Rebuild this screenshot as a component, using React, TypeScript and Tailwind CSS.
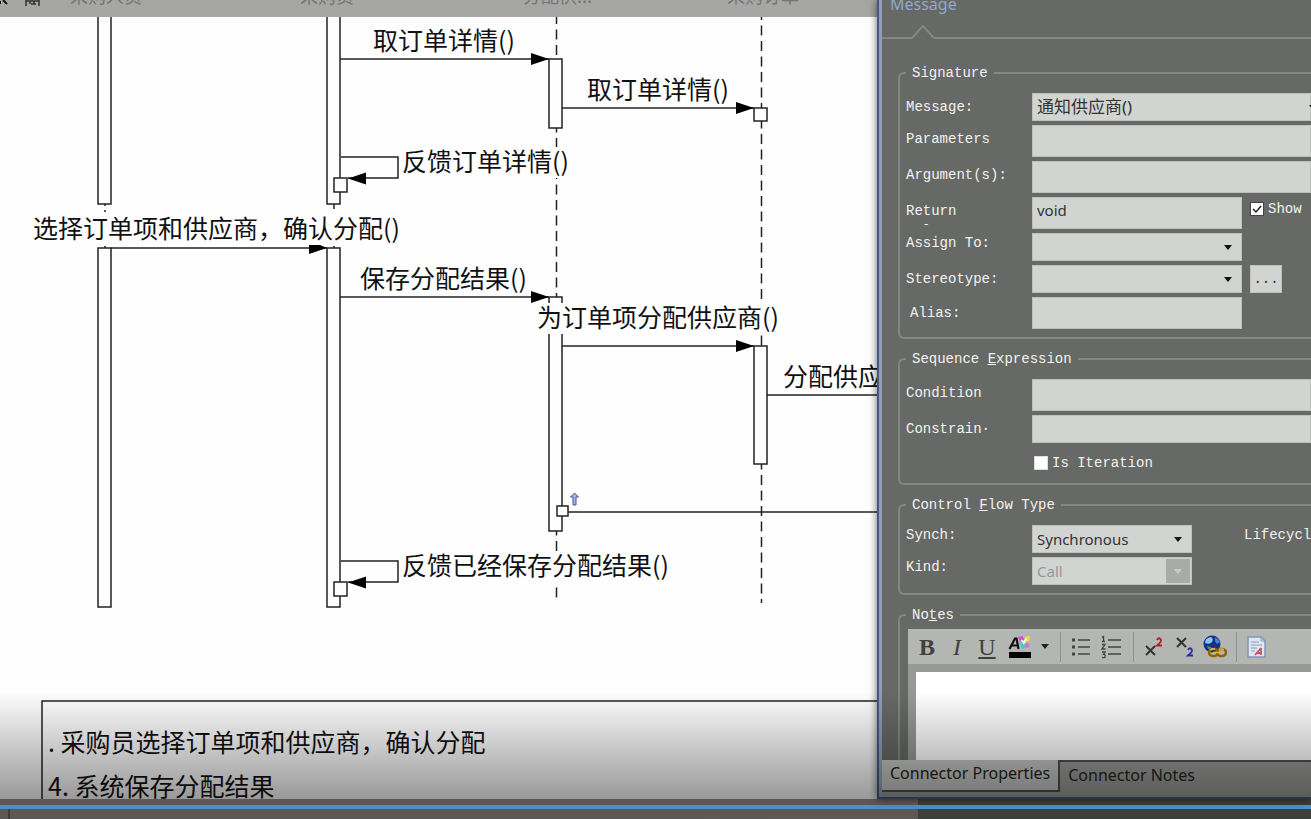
import { FC, ReactNode, useState } from "react";

interface PointProps {
    x: number
    y: number
}

interface LabelProps extends PointProps {
    width: number
    text: string
}

// message text, with a white plate that hides the lifeline behind it
const Label: FC<LabelProps> = ({ x, y, width, text }) => (
    <g>
        <rect x={x} y={y - 24} width={width} height={31} fill="#fdfefd" />
        <text x={x} y={y} fontSize={25} fill="#111">{text}</text>
    </g>
)

const Activation: FC<PointProps & { height: number, width?: number }> = ({ x, y, height, width = 13 }) => (
    <rect x={x} y={y} width={width} height={height} fill="#fdfefd" stroke="#222" strokeWidth={1.5} />
)

const Arrow: FC<{ from: number, to: number, y: number }> = ({ from, to, y }) => (
    <g>
        <path d={`M${from} ${y}H${to}`} stroke="#222" strokeWidth={1.5} />
        <path d={`M${to} ${y}l-18 -6v12z`} fill="#000" />
    </g>
)

const SelfMessage: FC<{ y: number }> = ({ y }) => (
    <g>
        <path d={`M341 ${y}H398V${y + 21}H348`} fill="none" stroke="#222" strokeWidth={1.5} />
        <path d={`M348 ${y + 21.5}l18 -6v12z`} fill="#000" />
        <Activation x={334} y={y + 21} height={14} />
    </g>
)

const participants = [
    { name: "采购人员", x: 70 },
    { name: "采购员", x: 300 },
    { name: "分配供...", x: 523 },
    { name: "采购订单", x: 727 },
]

const Diagram: FC = () => (
    <svg className="block h-full w-full bg-[#fdfefd] font-['Noto_Sans_CJK_SC',sans-serif]">
        <path d="M556.5 17V603" stroke="#222" strokeWidth={1.5} strokeDasharray="10 5.5" strokeDashoffset={3} />
        <path d="M761.5 17V603" stroke="#222" strokeWidth={1.5} strokeDasharray="10 5.5" strokeDashoffset={7} />
        <path d="M105 204v2M105 210v2M334 204v5M105 246v2M334 246v2" stroke="#222" strokeWidth={1.5} />

        <Activation x={98} y={-10} height={214} />
        <Activation x={327} y={-10} height={214} />
        <Activation x={549} y={59} height={69} />
        <Activation x={754} y={108} height={13} />
        <Activation x={98} y={248} height={359} />
        <Activation x={327} y={248} height={359} />
        <Activation x={549} y={297} height={234} />
        <Activation x={754} y={346} height={118} />

        <Arrow from={340} to={549} y={59} />
        <Arrow from={562} to={754} y={108} />
        <Arrow from={340} to={549} y={297} />
        <Arrow from={562} to={754} y={346} />
        <path d="M767 395H2000M568 512H2000" stroke="#222" strokeWidth={1.5} />
        <SelfMessage y={157} />
        <SelfMessage y={561} />
        <Activation x={557} y={506} width={11} height={10} />
        <path d="M574.500 493l4 4h-2.500v8h-3v-8h-2.500z" fill="#a9b0f0" stroke="#4c5488" strokeWidth={1} />

        <Label x={373} y={50} width={144} text="取订单详情()" />
        <Label x={587} y={99} width={144} text="取订单详情()" />
        <Label x={402} y={171} width={170} text="反馈订单详情()" />
        <Label x={33} y={238} width={371} text="选择订单项和供应商，确认分配()" />
        <Label x={360} y={288} width={170} text="保存分配结果()" />
        <Label x={537} y={327} width={246} text="为订单项分配供应商()" />
        <Label x={783} y={386} width={100} text="分配供应" />
        <Label x={402} y={575} width={271} text="反馈已经保存分配结果()" />
        <path d="M111 248H327" stroke="#222" strokeWidth={1.5} />
        <path d="M309 245h11l7 3l-18 6z" fill="#000" />

        <path d="M42 820V701H2000" fill="none" stroke="#222" strokeWidth={1.5} />
        <text x={48} y={752} fontSize={25} fill="#111">. 采购员选择订单项和供应商，确认分配</text>
        <text x={48} y={796} fontSize={25} fill="#111">4. 系统保存分配结果</text>

        {/* frozen header with participant names */}
        <rect width="100%" height={17} fill="#a6a7a5" />
        <path d="M0 1v3M3 0l4 4" stroke="#111" strokeWidth={2} />
        <path d="M26 0v6M39 0v6M26 1h13M30 1v3M34 1v3M31 4h5" fill="none" stroke="#333" strokeWidth={1.5} />
        {participants.map(p => (
            <text key={p.name} x={p.x} y={3} fontSize={18} fill="#747573">{p.name}</text>
        ))}
    </svg>
)

const Group: FC<{ title: ReactNode, className: string, children: ReactNode }> = ({ title, className, children }) => (
    <fieldset className={`min-w-0 rounded-l-md border-2 border-r-0 border-[#858784] pl-1.5 ${className}`}>
        <legend className="px-1.5 text-sm leading-5">{title}</legend>
        {children}
    </fieldset>
)

const Caret: FC<{ className?: string }> = ({ className = "right-2.5 text-[#111]" }) => (
    <svg className={`pointer-events-none absolute top-3 h-[5px] w-2 ${className}`} viewBox="0 0 8 5">
        <path d="M0 0h8L4 5z" fill="currentColor" />
    </svg>
)

interface RowProps {
    id: string
    label: string
    labelClass?: string
    children: ReactNode
}

const Row: FC<RowProps> = ({ id, label, labelClass = "mt-1", children }) => (
    <div className="flex items-start">
        <label htmlFor={id} className={`w-[126px] shrink-0 text-sm leading-5 ${labelClass}`}>{label}</label>
        {children}
    </div>
)

const field = "block border border-[#bfc1be] bg-[#d2d4d1] px-1 text-[#333] outline-none font-['Noto_Sans','Noto_Sans_CJK_SC',sans-serif]"

const ToolButton: FC<{ label: string, className: string, children: ReactNode }> = ({ label, className, children }) => (
    <button type="button" aria-label={label} className={`flex h-8 shrink-0 items-center justify-center text-[#3f403f] ${className}`}>
        {children}
    </button>
)

const Toolbar: FC = () => (
    <div className="flex h-[35px] shrink-0 items-center bg-[#b4b6b4] pl-1">
        <ToolButton label="Bold" className="w-[30px] font-['Liberation_Serif',serif] text-2xl font-bold">B</ToolButton>
        <ToolButton label="Italic" className="w-[30px] font-['Liberation_Serif',serif] text-2xl italic">I</ToolButton>
        <ToolButton label="Underline" className="w-[30px] font-['Liberation_Serif',serif] text-2xl underline">U</ToolButton>
        <ToolButton label="Font colour" className="w-9">
            <svg width="24" height="24" viewBox="0 0 24 24">
                <path d="M1.500 14L7 3.500h1.500l2 10.500M4 10.500h6" fill="none" stroke="#111" strokeWidth="2.200" />
                <path d="M10 2l5-1 1 4-4 2z" fill="#d24fd0" />
                <path d="M17 2l5-1-1 5-4 1z" fill="#f0dc50" />
                <path d="M12 8l4-1 2 5-4 2z" fill="#35cfdc" />
                <path d="M18 8l4 1-2 4-3-1z" fill="#e06cc0" />
                <path d="M13 5l4 3M18 4l-3 5" stroke="#fff" strokeWidth="1.500" />
                <rect x="1" y="17" width="22" height="6" fill="#000" />
            </svg>
        </ToolButton>
        <ToolButton label="Pick font colour" className="w-3.5">
            <svg width="8" height="5" viewBox="0 0 8 5"><path d="M0 0h8L4 5z" fill="#222" /></svg>
        </ToolButton>
        <span className="mx-2 h-[30px] w-px bg-[#8e908e]" />
        <ToolButton label="Bulleted list" className="w-6">
            <svg width="20" height="20" viewBox="0 0 20 20" stroke="#444" strokeWidth="1.500">
                <path d="M7 3h12M7 10h12M7 17h12" />
                <path d="M1 3h3M1 10h3M1 17h3" strokeWidth="3" />
            </svg>
        </ToolButton>
        <ToolButton label="Numbered list" className="w-9">
            <svg width="20" height="24" viewBox="0 0 20 24" stroke="#444" strokeWidth="1.300" fill="none">
                <path d="M7 5h13M7 12h13M7 19h13" strokeWidth="1.500" />
                <path d="M1 2.500l1.500-1v5M1 6.500h3M1 9.500h3l-3 4.500h3.500M1 17h3l-1.500 2.300q2 0 1.700 2t-3.200 1" />
            </svg>
        </ToolButton>
        <span className="mx-1 h-[30px] w-px bg-[#8e908e]" />
        <ToolButton label="Superscript" className="w-8">
            <svg width="18" height="20" viewBox="0 0 18 20" fill="none">
                <path d="M1 9l9 9M10 9l-9 9" stroke="#333" strokeWidth="2" />
                <path d="M12 3q2-3.500 4 0q.5 2-4 5.500h5" stroke="#a8232c" strokeWidth="1.800" />
            </svg>
        </ToolButton>
        <ToolButton label="Subscript" className="w-[30px]">
            <svg width="18" height="20" viewBox="0 0 18 20" fill="none">
                <path d="M1 1l9 9M10 1l-9 9" stroke="#333" strokeWidth="2" />
                <path d="M12 13q2-3.500 4 0q.5 2-4 5.500h5" stroke="#2b2fa5" strokeWidth="1.800" />
            </svg>
        </ToolButton>
        <ToolButton label="Hyperlink" className="w-[30px]">
            <svg width="24" height="24" viewBox="0 0 24 24" fill="none">
                <circle cx="9" cy="9" r="8.500" fill="#15308a" />
                <path d="M2 8q0-5 6-6q3 2 1 5t-7 1z" fill="#8cc4ea" />
                <path d="M12 2q4 2 5 5l-3 2-2-3z" fill="#4f7fc4" />
                <path d="M4 11l4 1 1 4q-4-1-5-5z" fill="#4d8f8a" />
                <rect x="6" y="14" width="9" height="7" rx="3.500" stroke="#8f6208" strokeWidth="2.500" />
                <rect x="14" y="14" width="9" height="7" rx="3.500" stroke="#8f6208" strokeWidth="2.500" />
                <path d="M10 17.500h9M7 15q2-1.500 5-1M16 14.500q3-1 5 0" stroke="#e6b93c" strokeWidth="1.500" />
            </svg>
        </ToolButton>
        <span className="mx-1.5 h-[30px] w-px bg-[#8e908e]" />
        <ToolButton label="Insert document" className="w-7">
            <svg width="20" height="24" viewBox="0 0 20 24" fill="none">
                <path d="M1 2h13l4 4v16H1z" fill="#dfe6f1" stroke="#8496bd" strokeWidth="1.500" />
                <path d="M14 2v4h4M4 7h8M4 10h11M4 13h6M4 16h4" stroke="#8a9bc0" />
                <path d="M14 13v7M14 13l-6 7M10 18h4" stroke="#c9545c" strokeWidth="1.800" />
            </svg>
        </ToolButton>
    </div>
)

const PropertiesPanel: FC = () => {
    const [message, setMessage] = useState("通知供应商()")
    const [returnValue, setReturnValue] = useState("void")
    const [show, setShow] = useState(true)
    const [iteration, setIteration] = useState(false)
    const [synch, setSynch] = useState("Synchronous")

    return (
        <aside className="relative flex w-[434px] shrink-0 flex-col overflow-hidden border-b-2 border-l-2 border-[#46587c] bg-[#676966] font-['Liberation_Mono',monospace] text-[#f2f3f1]">
            <div className="flex min-h-0 flex-1 flex-col border-l-3 border-[#909fb4]">
                <h2 className="-mt-2 h-[33px] pl-2 font-['Noto_Sans',sans-serif] text-base leading-6 text-[#93a6cc]">Message</h2>
                {/* tab underline with a notch below the active title */}
                <div className="flex h-3.5 items-end">
                    <span className="h-0.5 w-[30px] bg-[#858784]" />
                    <svg width="22" height="14" viewBox="0 0 22 14">
                        <path d="M0 13L11 1L22 13" fill="none" stroke="#858784" strokeWidth="2" />
                    </svg>
                    <span className="h-0.5 flex-1 bg-[#858784]" />
                </div>

                <form className="mt-6 flex min-h-0 flex-1 flex-col gap-2.5 pl-4">
                    <Group title="Signature" className="pt-2.5 pb-2">
                        <div className="flex flex-col gap-1">
                            <Row id="message" label="Message:">
                                <div className="relative min-w-0 flex-1">
                                    <select id="message" value={message} onChange={e => setMessage(e.target.value)}
                                        className={`${field} h-7 w-full appearance-none text-[17px]`}>
                                        <option>通知供应商()</option>
                                    </select>
                                    <Caret className="-right-1.5 text-[#111]" />
                                </div>
                            </Row>
                            <Row id="parameters" label="Parameters">
                                <input id="parameters" className={`${field} h-8 min-w-0 flex-1 text-[15px]`} />
                            </Row>
                            <Row id="arguments" label="Argument(s):">
                                <input id="arguments" className={`${field} h-8 min-w-0 flex-1 text-[15px]`} />
                            </Row>
                            <Row id="return" label="Return Value:" labelClass="mt-1 h-6 overflow-hidden pr-12">
                                <input id="return" value={returnValue} onChange={e => setReturnValue(e.target.value)}
                                    className={`${field} h-8 w-[210px] pb-1.5 text-[15px]`} />
                                <label className="ml-2 flex h-6 items-center gap-1 text-sm">
                                    <span className="relative">
                                        <input type="checkbox" checked={show} onChange={() => setShow(!show)}
                                            className="block size-3.5 appearance-none border border-[#444] bg-white" />
                                        {show && <svg className="pointer-events-none absolute inset-0 size-3.5" viewBox="0 0 14 14">
                                            <path d="M3 7l3 3 5-6" fill="none" stroke="#222" strokeWidth="1.500" />
                                        </svg>}
                                    </span>
                                    Show
                                </label>
                            </Row>
                            <Row id="assign" label="Assign To:" labelClass="">
                                <div className="relative w-[210px] shrink-0">
                                    <select id="assign" className={`${field} h-7 w-full appearance-none text-[15px]`}><option></option></select>
                                    <Caret />
                                </div>
                            </Row>
                            <Row id="stereotype" label="Stereotype:">
                                <div className="relative w-[210px] shrink-0">
                                    <select id="stereotype" className={`${field} h-7 w-full appearance-none text-[15px]`}><option></option></select>
                                    <Caret />
                                </div>
                                <button type="button" className="ml-2 h-7 w-8 border border-[#bfc1be] bg-[#d2d4d1] text-sm text-[#333]">...</button>
                            </Row>
                            <Row id="alias" label="Alias:" labelClass="mt-1.5 pl-1">
                                <input id="alias" className={`${field} h-8 w-[210px] text-[15px]`} />
                            </Row>
                        </div>
                    </Group>

                    <Group title={<>Sequence <u>E</u>xpression</>} className="pt-2.5 pb-1">
                        <div className="flex flex-col gap-1">
                            <Row id="condition" label="Condition">
                                <input id="condition" className={`${field} h-8 min-w-0 flex-1 text-[15px]`} />
                            </Row>
                            <Row id="constraint" label="Constrain·">
                                <input id="constraint" className={`${field} h-7 min-w-0 flex-1 text-[15px]`} />
                            </Row>
                            <label className="ml-32 flex h-8 items-center gap-1 text-sm">
                                <input type="checkbox" checked={iteration} onChange={() => setIteration(!iteration)}
                                    className="size-3.5 appearance-none border border-[#ddd] bg-white checked:bg-[#46587c]" />
                                Is Iteration
                            </label>
                        </div>
                    </Group>

                    <Group title={<>Control <u>F</u>low Type</>} className="pt-2.5 pb-2">
                        <div className="flex flex-col gap-1">
                            <Row id="synch" label="Synch:" labelClass="">
                                <div className="relative w-40 shrink-0">
                                    <select id="synch" value={synch} onChange={e => setSynch(e.target.value)}
                                        className={`${field} h-7 w-full appearance-none text-[15px]`}>
                                        <option>Synchronous</option>
                                        <option>Asynchronous</option>
                                    </select>
                                    <Caret />
                                </div>
                                <span className="ml-[52px] text-sm leading-5">Lifecycl</span>
                            </Row>
                            <Row id="kind" label="Kind:" labelClass="">
                                <div className="relative w-40 shrink-0">
                                    <select id="kind" disabled className={`${field} h-7 w-full appearance-none text-[15px] text-[#969896] opacity-100`}>
                                        <option>Call</option>
                                    </select>
                                    <span className="pointer-events-none absolute top-0.5 right-0.5 h-6 w-6 bg-[#a9aba9]" />
                                    <Caret className="right-2.5 text-[#c8cac8]" />
                                </div>
                            </Row>
                        </div>
                    </Group>

                    <Group title={<>No<u>t</u>es</>} className="flex min-h-0 flex-1 flex-col rounded-bl-none border-b-0 pt-1">
                        <div className="ml-0.5 flex min-h-0 flex-1 flex-col bg-[#979996]">
                            <Toolbar />
                            <textarea aria-label="Notes" className="mt-2 ml-2 min-h-0 flex-1 resize-none bg-white p-1 text-sm text-black outline-none" />
                        </div>
                    </Group>
                </form>

                <div role="tablist" className="flex h-[37px] shrink-0 items-start bg-[#979996] font-['Noto_Sans',sans-serif] text-base text-[#222]">
                    <button type="button" role="tab" aria-selected="true" className="h-8 shrink-0 border-r-2 border-b-2 border-[#4c4e4c] bg-[#c2c4c2] px-2 pb-1">
                        Connector Properties
                    </button>
                    <button type="button" role="tab" aria-selected="false" className="h-8 flex-1 border-t-2 border-[#4c4e4c] px-2 pb-1 text-left">
                        Connector Notes
                    </button>
                </div>
            </div>
        </aside>
    )
}

const App: FC = () => {
    return (
        <div className="flex h-screen flex-col overflow-hidden bg-[#5b5856]">
            <main className="relative flex min-h-0 flex-1">
                <div className="min-w-0 flex-1">
                    <Diagram />
                </div>
                <div className="flex shadow-[0_0_8px_rgba(0,0,0,0.6)]">
                    <PropertiesPanel />
                </div>
                {/* shade behind the player controls */}
                <div className="pointer-events-none absolute inset-x-0 bottom-0 h-[108px] bg-linear-to-b from-transparent to-black/40" />
            </main>
            <footer className="h-5 shrink-0 bg-linear-to-r from-[#5b5856] from-70% to-[#3d3f3d] to-70% pt-1.5">
                <div role="progressbar" aria-label="Playback" aria-valuenow={100} className="h-1 bg-[#4a90cd]" />
                <div className="ml-2 h-2.5 w-0.5 bg-[#3d3d3c]" />
            </footer>
        </div>
    )
}

export default App;
